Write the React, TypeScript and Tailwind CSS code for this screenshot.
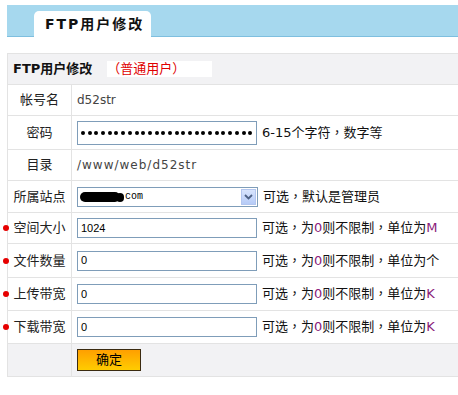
import React from 'react';

const font = "font-['DejaVu_Sans','Noto_Sans_CJK_SC',sans-serif]";
const hintFont = "font-['DejaVu_Sans','Noto_Sans_CJK_TC',sans-serif]";

interface RowProps {
    label: string;
    dot?: boolean;
    h: string;
    children: React.ReactNode;
}

const Row: React.FC<RowProps> = ({ label, dot, h, children }) => (
    <div className={`flex ${h} border-b border-[#e3e3e3] bg-white`}>
        <div className="w-[64px] shrink-0 border-r border-[#e3e3e3] flex items-center justify-center text-[13px] text-[#222]">
            <span className="relative">
                {dot && <span className="absolute left-[-10px] top-1/2 -translate-y-1/2 w-[6px] h-[6px] rounded-full bg-[#e60000]" />}
                {label}
            </span>
        </div>
        <div className="flex-1 flex items-center pl-[5px]">{children}</div>
    </div>
);

const TextBox: React.FC<{ value: string }> = ({ value }) => (
    <div className="w-[180px] h-[20px] border border-[#7f9db9] bg-white flex items-center pl-[3px] text-[11px] text-black font-['Liberation_Sans',sans-serif]">
        {value}
    </div>
);

const Hint: React.FC<{ unit: string }> = ({ unit }) => (
    <span className={`ml-[5px] text-[13px] text-[#111] ${hintFont}`}>
        可选，为<span className="text-[#8a1a7a]">0</span>则不限制，单位为<span className="text-[#8a1a7a]">{unit}</span>
    </span>
);

const App: React.FC = () => {
    return (
        <div className={`w-[458px] h-[395px] bg-white overflow-hidden ${font}`}>
            {/* 顶部标签栏 */}
            <div className="ml-[7px] mt-[5px] h-[32px] bg-[#a6d8ee] border-b border-[#7ebfdf] flex items-end">
                <div className="ml-[27px] w-[117px] h-[26px] -mb-px bg-white rounded-t-[5px] flex items-center pl-[11px] text-[14px] font-bold tracking-[2px] text-[#111]">
                    FTP用户修改
                </div>
            </div>

            {/* 表单 */}
            <div className="ml-[7px] mt-[16px] border-l border-t border-[#e3e3e3]">
                <div className="h-[31px] bg-[#f2f2f4] border-b border-[#e3e3e3] flex items-center pl-[5px]">
                    <span className="text-[13px] font-bold text-[#111]">FTP用户修改</span>
                    <span className="ml-[15px] w-[105px] h-[16px] bg-white flex items-center text-[13px] text-[#e00000]">（普通用户）</span>
                </div>

                <Row label="帐号名" h="h-[31px]">
                    <span className="text-[12px] text-[#444]">d52str</span>
                </Row>

                <Row label="密码" h="h-[34px]">
                    <div className="w-[180px] h-[24px] border border-[#7f9db9] bg-white flex items-center gap-[2.7px] pl-[3px]">
                        {Array.from({ length: 26 }).map((_, i) => (
                            <span key={i} className="w-[4px] h-[4px] rounded-full bg-black shrink-0" />
                        ))}
                    </div>
                    <span className={`ml-[5px] text-[13px] text-[#111] ${hintFont}`}>6-15个字符，数字等</span>
                </Row>

                <Row label="目录" h="h-[31px]">
                    <span className="text-[12px] text-[#444] tracking-[1px]">/www/web/d52str</span>
                </Row>

                <Row label="所属站点" h="h-[32px]">
                    <div className="w-[181px] h-[20px] border border-[#7f9db9] bg-white flex items-center relative">
                        <span className="ml-[2px] w-[40px] h-[10px] rounded-full bg-black" />
                        <span className="-ml-[4px] w-[8px] h-[9px] rounded-full bg-black mt-[2px]" />
                        <span className="ml-[1px] text-[10px] text-black font-['Liberation_Mono',monospace]">com</span>
                        <span className="absolute right-[1px] top-[1px] w-[15px] h-[16px] bg-gradient-to-b from-[#d8e4fd] to-[#b6cbf7] border border-[#b3c6ef] flex items-center justify-center">
                            <svg width="9" height="6" viewBox="0 0 9 6">
                                <path d="M1 1 L4.5 4.5 L8 1" stroke="#4d6185" strokeWidth="1.8" fill="none" />
                            </svg>
                        </span>
                    </div>
                    <span className={`ml-[5px] text-[13px] text-[#111] ${hintFont}`}>可选，默认是管理员</span>
                </Row>

                <Row label="空间大小" dot h="h-[31px]">
                    <TextBox value="1024" />
                    <Hint unit="M" />
                </Row>

                <Row label="文件数量" dot h="h-[34px]">
                    <TextBox value="0" />
                    <span className={`ml-[5px] text-[13px] text-[#111] ${hintFont}`}>
                        可选，为<span className="text-[#8a1a7a]">0</span>则不限制，单位为个
                    </span>
                </Row>

                <Row label="上传带宽" dot h="h-[33px]">
                    <TextBox value="0" />
                    <Hint unit="K" />
                </Row>

                <Row label="下载带宽" dot h="h-[33px]">
                    <TextBox value="0" />
                    <Hint unit="K" />
                </Row>

                <div className="flex h-[33px] bg-[#f2f2f4] border-b border-[#e3e3e3]">
                    <div className="w-[64px] shrink-0 border-r border-[#e3e3e3]" />
                    <div className="flex-1 flex items-center pl-[5px]">
                        <button className="w-[64px] h-[22px] border border-[#3a2a10] bg-gradient-to-b from-[#ff9f00] to-[#ffcc00] text-[13px] text-black flex items-center justify-center">
                            确定
                        </button>
                    </div>
                </div>
            </div>
        </div>
    );
};

export default App;
